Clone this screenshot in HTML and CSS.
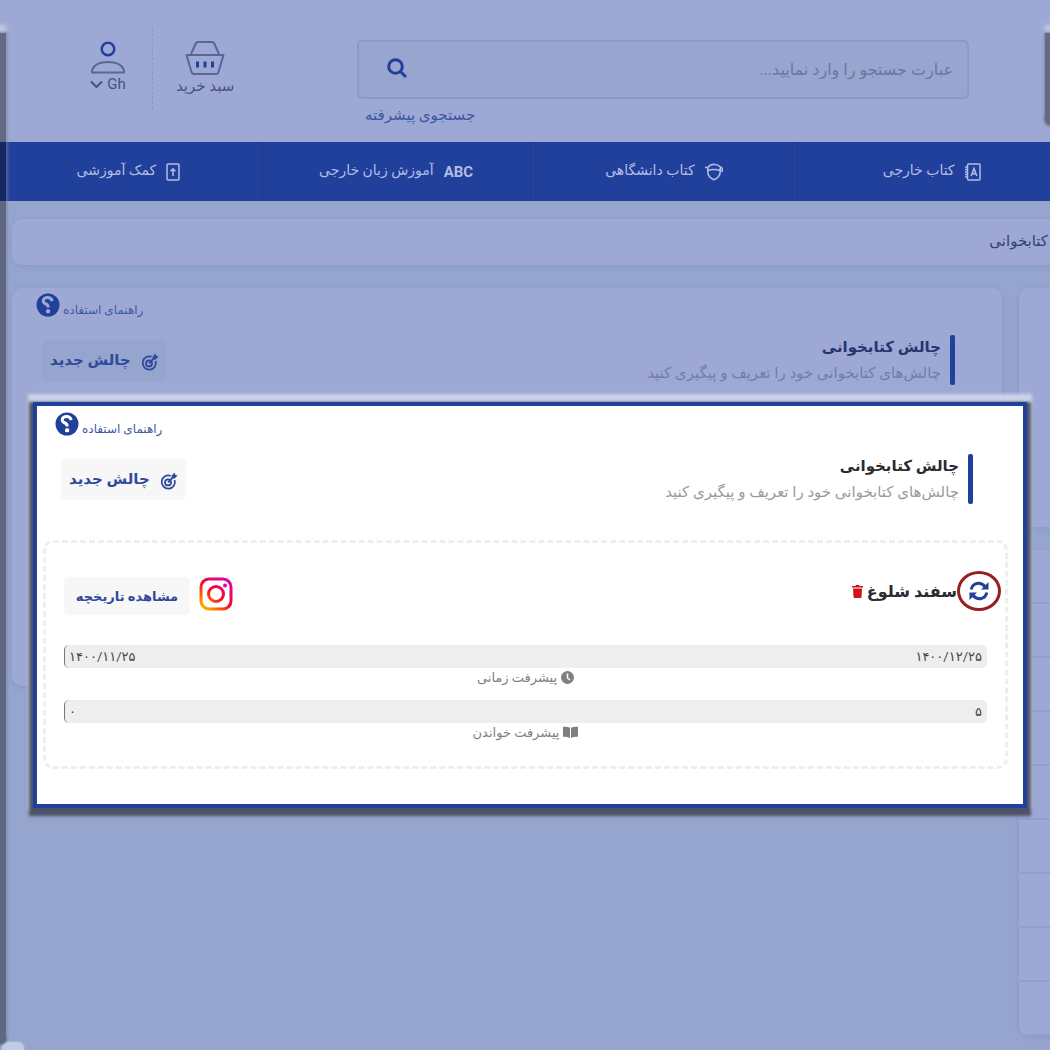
FILE: index.html
```
<!DOCTYPE html>
<html lang="fa" dir="rtl">
<head>
	<title>چالش کتابخوانی</title>
	<meta charset="utf-8">
	<meta name="viewport" content="width=device-width, initial-scale=1">
	<link rel="stylesheet" href="styles.css">
</head>

<body>

	<!-- shared icons -->
	<svg class="sprite" aria-hidden="true">
		<symbol id="help" viewBox="0 0 24 24">
			<circle cx="12" cy="12" r="11.5" fill="currentColor"/>
			<path d="M16.200 8.200C15.600 5.600 13.800 4.600 11.600 4.600C9 4.600 7.200 6 7.200 8C7.200 9.800 8.600 10.400 10 11C11.600 11.700 12.200 12.400 12.200 14.600" fill="none" stroke="var(--help-mark)" stroke-width="3"/>
			<rect x="10" y="16.200" width="4.200" height="4" rx="1.500" fill="var(--help-mark)"/>
		</symbol>
		<symbol id="target" viewBox="0 0 18 18">
			<path d="M10.6 3.8A6.6 6.6 0 1 0 14.6 8" fill="none" stroke="currentColor" stroke-width="1.8"/>
			<circle cx="8" cy="10.4" r="3" fill="none" stroke="currentColor" stroke-width="1.8"/>
			<path d="M8 10.4L13.6 4.6" stroke="currentColor" stroke-width="1.8"/>
			<path d="M11.6 6.4V3.4L14.6.4L15.2 2.8L17.6 3.4L14.6 6.4Z" fill="currentColor"/>
		</symbol>
	</svg>

	<header class="header">
		<form class="search">
			<div class="search-box">
				<input type="text" aria-label="جستجو" placeholder="عبارت جستجو را وارد نمایید...">
				<button type="button" aria-label="جستجو">
					<svg width="20" height="20" viewBox="0 0 20 20" fill="none" stroke="currentColor" stroke-width="3"><circle cx="8.5" cy="8.5" r="6.8"/><path d="M13 13L19 19"/></svg>
				</button>
			</div>
			<a class="advanced" href="#">جستجوی پیشرفته</a>
		</form>
		<div class="tools">
			<a class="tool cart" href="#">
				<svg width="40" height="36" viewBox="0 0 40 36" fill="none" stroke="currentColor" stroke-width="2" stroke-linejoin="round">
					<path d="M6 14L11 3Q11.500 2 13 2H27Q28.500 2 29 3L34 14"/>
					<path d="M1.500 15H38.500L33.500 32Q33 34 31 34H9Q7 34 6.500 32Z"/>
					<path class="accent" d="M12.500 21.500V27.500M20 21.500V27.500M27.500 21.500V27.500" stroke-width="3"/>
				</svg>
				<span>سبد خرید</span>
			</a>
			<a class="tool user" href="#">
				<svg width="36" height="34" viewBox="0 0 36 34" fill="none" stroke="currentColor" stroke-width="2">
					<circle class="accent" cx="18" cy="9" r="6.300" stroke-width="2.500"/>
					<path d="M2 32.500V30C4 25 10 22 18 22S32 25 34 30V32.500Z" stroke-linejoin="round"/>
				</svg>
				<span class="name">
					Gh
					<svg width="13" height="9" viewBox="0 0 13 9" fill="none" stroke="currentColor" stroke-width="2"><path d="M1 1.500L6.500 7L12 1.500"/></svg>
				</span>
			</a>
		</div>
	</header>

	<nav class="menu">
		<a href="#">
			<svg width="16" height="18" viewBox="0 0 16 18" fill="none" stroke="currentColor" stroke-width="1.500"><rect x="2.500" y="1" width="12.500" height="16" rx="1"/><path d="M0 4H3M0 6.500H3M0 9H3M0 11.500H3M0 14H3"/><path d="M6.200 13L9 5.500L11.800 13M7 10.800H11"/></svg>
			<span>کتاب خارجی</span>
		</a>
		<a href="#">
			<svg width="18" height="18" viewBox="0 0 18 18" fill="none" stroke="currentColor" stroke-width="1.600"><path d="M0 4.500H2.500Q5 1.500 9 1.200Q13 1.500 15.500 4Q17.200 4.500 17.200 6V9"/><path d="M2.800 4.500V9C3 13 6 15.500 9 16.800C12 15.500 15 13 15.200 9V4.500M3 7.500Q9 5.500 15 7.500"/></svg>
			<span>کتاب دانشگاهی</span>
		</a>
		<a href="#">
			<b>ABC</b>
			<span>آموزش زبان خارجی</span>
		</a>
		<a href="#">
			<svg width="14" height="18" viewBox="0 0 14 18" fill="none" stroke="currentColor" stroke-width="1.500"><rect x="1" y="1" width="12" height="16" rx="1"/><path d="M7 13V6M4.500 8.200L7 5.700L9.500 8.200"/></svg>
			<span>کمک آموزشی</span>
		</a>
	</nav>

	<div class="breadcrumb">کتابخوانی</div>

	<div class="content">
		<aside class="side">
			<div class="card profile"></div>
			<ul class="card links">
				<li></li><li></li><li></li><li></li><li></li>
				<li></li><li></li><li></li><li></li>
			</ul>
		</aside>
		<main class="card main">
			<a class="help" href="#">راهنمای استفاده<svg width="24" height="24"><use href="#help"/></svg></a>
			<div class="head">
				<div class="title">
					<h1>چالش کتابخوانی</h1>
					<p>چالش‌های کتابخوانی خود را تعریف و پیگیری کنید</p>
				</div>
				<button class="btn new"><svg width="18" height="18"><use href="#target"/></svg>چالش جدید</button>
			</div>
		</main>
	</div>

	<div class="edge edge-left"></div>
	<div class="edge edge-right"></div>

	<section class="panel">
		<a class="help" href="#">راهنمای استفاده<svg width="24" height="24"><use href="#help"/></svg></a>
		<div class="head">
			<div class="title">
				<h1>چالش کتابخوانی</h1>
				<p>چالش‌های کتابخوانی خود را تعریف و پیگیری کنید</p>
			</div>
			<button class="btn new"><svg width="18" height="18"><use href="#target"/></svg>چالش جدید</button>
		</div>

		<article class="challenge">
			<div class="row">
				<div class="challenge-name">
					<button class="icon refresh" aria-label="ویرایش">
						<svg width="20" height="20" viewBox="0 0 20 20" fill="none" stroke="currentColor" stroke-width="3"><path d="M2.200 8.500C3.500 1.800 11.500 .2 15.800 5.500"/><path d="M17.800 11.500C16.500 18.200 8.500 19.800 4.200 14.500"/><path d="M19.500 1V8.500H12ZM.5 19V11.500H8Z" fill="currentColor" stroke="none"/></svg>
					</button>
					<h2>سفند شلوغ</h2>
					<button class="icon remove" aria-label="حذف">
						<svg width="11" height="13" viewBox="0 0 11 13" fill="currentColor"><path d="M0 1H3.500L4 0H7L7.500 1H11V2.500H0ZM1 3.500H10L9.500 12Q9.400 13 8.500 13H2.500Q1.600 13 1.500 12Z"/></svg>
					</button>
				</div>
				<div class="actions">
					<a class="instagram" href="#" aria-label="اینستاگرام">
						<svg width="34" height="34" viewBox="0 0 34 34" fill="none" stroke="url(#insta)" stroke-width="3">
							<defs>
								<linearGradient id="insta" gradientUnits="userSpaceOnUse" x1="3" y1="33" x2="29" y2="1">
									<stop offset="0" stop-color="#ffc400"/>
									<stop offset=".25" stop-color="#ff6a00"/>
									<stop offset=".5" stop-color="#f5092b"/>
									<stop offset="1" stop-color="#e400b4"/>
								</linearGradient>
							</defs>
							<rect x="2" y="2" width="30" height="30" rx="8"/>
							<circle cx="17" cy="17" r="7.500"/>
							<circle cx="26" cy="8.500" r="2" fill="#e400b4" stroke="none"/>
						</svg>
					</a>
					<button class="btn history">مشاهده تاریخچه</button>
				</div>
			</div>

			<div class="progress">
				<div class="bar"><span>۱۴۰۰/۱۲/۲۵</span><span>۱۴۰۰/۱۱/۲۵</span></div>
				<div class="caption">
					<svg width="13" height="13" viewBox="0 0 13 13"><circle cx="6.500" cy="6.500" r="6.500" fill="currentColor"/><path d="M6.500 2.500V7L9 9" fill="none" stroke="#fff" stroke-width="1.500"/></svg>
					پیشرفت زمانی
				</div>
			</div>
			<div class="progress">
				<div class="bar"><span>۵</span><span>۰</span></div>
				<div class="caption">
					<svg width="15" height="12" viewBox="0 0 15 12" fill="currentColor"><path d="M0 .8Q4 .2 7 1.800V12Q4 10.500 0 10.800ZM15 .8Q11 .2 8 1.800V12Q11 10.500 15 10.800Z"/></svg>
					پیشرفت خواندن
				</div>
			</div>
		</article>
	</section>

</body>
</html>
```
FILE: styles.css
```
:root {
	--blue: #20409b;
	--page: #95a5ce;
	--card: #9da9d4;
	--help-mark: #fff;
}

* {
	box-sizing: border-box;
}

body {
	margin: 0;
	min-height: 100vh;
	position: relative;
	overflow: hidden;
	background-color: var(--page);
	color: #35416f;
	font-family: "Roboto", "DejaVu Sans", sans-serif;
	font-size: 15px;
}

a {
	color: inherit;
	text-decoration: none;
}

button, input {
	font: inherit;
	color: inherit;
	border: 0;
	background: none;
	padding: 0;
}

button {
	cursor: pointer;
}

svg {
	display: block;
	flex: none;
}

h1, h2, p, ul {
	margin: 0;
	padding: 0;
}

.sprite {
	position: absolute;
	width: 0;
	height: 0;
}

/* header */

.header {
	display: flex;
	justify-content: space-between;
	height: 142px;
	padding: 40px 81px 0 90px;
	background-color: var(--card);
}

.search {
	flex: 0 1 612px;
}

.search-box {
	display: flex;
	align-items: center;
	height: 59px;
	padding: 0 14px 0 28px;
	border: 2px solid #8a9aca;
	border-radius: 5px;
	background-color: #98a5cf;
}

.search-box input {
	flex: 1;
	min-width: 0;
	height: 40px;
	font-size: 16px;
	outline: 0;
}

.search-box input::placeholder {
	color: #6b76a3;
	opacity: 1;
}

.search-box button {
	color: var(--blue);
	padding-bottom: 3px;
}

.advanced {
	display: block;
	padding: 7px 0 0 8px;
	text-align: left;
	line-height: 18px;
	color: #3c55a5;
}

.tools {
	display: flex;
	margin-top: -12px;
	height: 81px;
}

.tool {
	display: flex;
	flex-direction: column;
	align-items: center;
	padding-top: 12px;
	color: #5a6796;
}

.tool span {
	line-height: 20px;
	color: #465281;
}

.tool .accent {
	stroke: var(--blue);
}

.cart {
	padding-left: 23px;
	border-left: 1px dashed #8b98c4;
}

.user {
	padding-right: 26px;
}

.tool .name {
	display: flex;
	align-items: center;
	gap: 4px;
}

/* menu */

.menu {
	display: grid;
	grid-template-columns: repeat(4, 1fr);
	height: 59px;
	margin: 0 -15px 0 -6px;
	background-color: var(--blue);
}

.menu a {
	display: flex;
	align-items: center;
	justify-content: center;
	gap: 10px;
	border-left: 1px dotted #1a3484;
	color: #b3bde2;
	font-size: 14px;
}

.menu span {
	padding-bottom: 3px;
}

.menu b {
	font-size: 15px;
}

.breadcrumb {
	height: 46px;
	margin: 18px -240px 0 12px;
	padding: 0 242px 0 0;
	border-radius: 10px;
	background-color: var(--card);
	box-shadow: 0 1px 6px #8798c3;
	line-height: 44px;
}

/* content */

.content {
	display: grid;
	grid-template-columns: 271px 1fr;
	align-items: start;
	gap: 17px;
	margin: 23px -240px 0 12px;
}

.card {
	border-radius: 10px;
	background-color: var(--card);
	box-shadow: 0 1px 6px #8798c3;
}

.profile {
	height: 239px;
	margin-bottom: 23px;
}

.links {
	list-style: none;
}

.links li {
	height: 54px;
	border-bottom: 2px solid #91a0cb;
}

.main {
	--help-mark: #9da9d4;
	min-height: 398px;
	padding: 5px 47px 0 24px;
}

.main .new {
	background-color: #95a5ce;
}

.main h1 {
	color: #27356e;
}

.main p {
	color: #717da9;
}

.help {
	display: flex;
	align-items: flex-end;
	justify-content: flex-end;
	gap: 3px;
	height: 24px;
	font-size: 12px;
	color: #4058a4;
}

.help svg {
	color: var(--blue);
}

.head {
	display: flex;
	align-items: center;
	justify-content: space-between;
	margin-top: 18px;
	padding-left: 6px;
}

.title {
	height: 50px;
	padding-right: 14px;
	position: relative;
}

.title::before {
	content: "";
	position: absolute;
	top: 0;
	right: 0;
	width: 5px;
	height: 50px;
	border-radius: 2px;
	background-color: var(--blue);
}

.title h1 {
	font-size: 15px;
	line-height: 25px;
}

.title p {
	line-height: 26px;
}

.btn {
	display: flex;
	align-items: center;
	justify-content: center;
	gap: 10px;
	border-radius: 5px;
	background-color: #f7f7f7;
	color: #2f499d;
	font-weight: bold;
}

.new {
	height: 41px;
	padding: 0 8px;
}

.new svg {
	margin-top: 4px;
}

/* highlighted panel */

.panel {
	position: absolute;
	top: 402px;
	left: 33px;
	right: 23px;
	padding: 6px 15px 35px 6px;
	border: 4px solid var(--blue);
	background-color: #fff;
	box-shadow: 0 4px 3px 4px #4d5266, 0 -3px 3px 5px #ccd4ea;
}

.panel > .help {
	padding-left: 12px;
}

.panel > .head {
	padding-right: 35px;
	padding-left: 18px;
}

.panel h1, .panel h2 {
	color: #2b2b30;
}

.panel p {
	color: #9a9a9e;
}

.challenge {
	margin-top: 36px;
	padding: 34px 18px 23px;
	border: 3px dashed #eee;
	border-radius: 10px;
}

.row, .challenge-name {
	display: flex;
	align-items: center;
}

.row {
	justify-content: space-between;
	height: 38px;
	margin-bottom: 30px;
}

.challenge-name {
	align-self: flex-start;
	height: 28px;
	margin-right: -2px;
}

.challenge-name h2 {
	margin-right: 12px;
	margin-left: 4px;
	font-size: 16px;
}

.icon {
	position: relative;
}

.refresh {
	color: var(--blue);
}

.refresh::after {
	content: "";
	position: absolute;
	inset: -10px -12px;
	border: 3px solid #941f24;
	border-radius: 50%;
}

.remove {
	color: #d01218;
}

.actions {
	display: flex;
	align-items: flex-start;
	gap: 9px;
}

.history {
	width: 126px;
	height: 38px;
	font-size: 13px;
}

.bar {
	display: flex;
	align-items: center;
	justify-content: space-between;
	height: 23px;
	padding: 0 5px 0 4px;
	border-left: 1px solid #777;
	border-radius: 5px;
	background-color: #eee;
	color: #444;
	font-size: 13px;
}

.caption {
	display: flex;
	align-items: center;
	justify-content: center;
	gap: 4px;
	height: 18px;
	margin-bottom: 14px;
	color: #808084;
	font-size: 13px;
}

.progress:last-child .caption {
	margin-bottom: 2px;
}

/* window edges */

.edge {
	position: absolute;
	width: 14px;
	background-color: rgba(0, 0, 0, .37);
	box-shadow: 0 0 3px 1px rgba(0, 0, 0, .3), 0 -8px 4px #c0cbe8;
}

.edge-left {
	top: 33px;
	bottom: 6px;
	left: -8px;
}

.edge-left::after {
	content: "";
	position: absolute;
	left: 10px;
	bottom: -12px;
	width: 22px;
	height: 14px;
	border-radius: 7px;
	background-color: #c0cbe8;
	box-shadow: 0 0 3px #c0cbe8;
}

.edge-right {
	top: 33px;
	right: -9px;
	height: 92px;
	border-radius: 0 0 5px 5px;
}
```
